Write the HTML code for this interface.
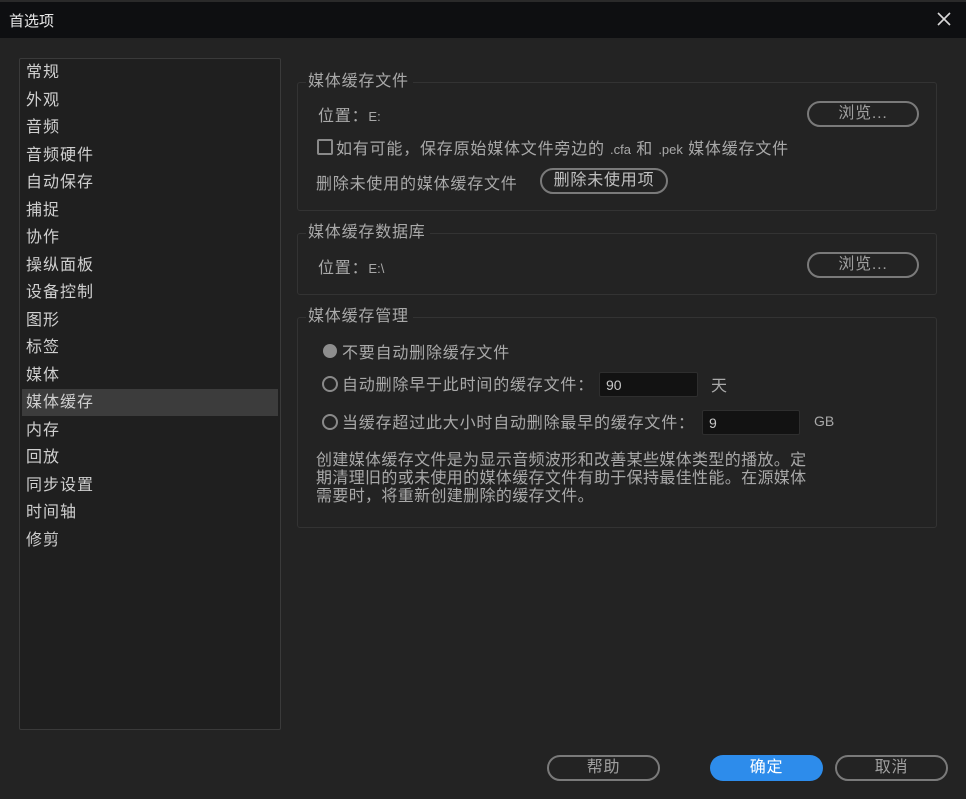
<!DOCTYPE html>
<html><head><meta charset="utf-8"><style>
*{margin:0;padding:0;box-sizing:border-box}
body{width:966px;height:799px;background:#232323;font-family:"Liberation Sans","Noto Sans CJK SC",sans-serif;color:#a9a9a9;position:relative;overflow:hidden;font-size:16px;letter-spacing:0.8px}
.abs{position:absolute;white-space:nowrap}
#title{left:0;top:0;width:966px;height:38px;background:#0e0f11;border-top:2px solid #2a2a2a}
#list{left:19px;top:58px;width:262px;height:672px;background:#1f1f1f;border:1px solid #3a3a3a;border-radius:2px}
.li{position:absolute;left:6px;font-size:16px;color:#cfcfcf;height:27px;line-height:28px;letter-spacing:1px}
.grp{position:absolute;border:1px solid #333;border-radius:3px}
.leg{position:absolute;top:-11px;left:8px;background:#232323;padding:0 4px 0 2px;font-size:16px;color:#a9a9a9;line-height:20px}
.btn{position:absolute;border:2px solid #7a7a7a;border-radius:13px;text-align:center;color:#a0a0a0;font-size:16px}
.inp{position:absolute;background:#121212;border:1px solid #2e2e2e;border-radius:2px;color:#c8c8c8;font-size:14px;padding-left:6px;line-height:24px;letter-spacing:0}
.radio{position:absolute;width:16px;height:16px;border-radius:50%;border:2px solid #8a8a8a}
.sm{font-size:13px;letter-spacing:0}
</style></head><body>
<div id="title" class="abs"></div>
<div class="abs" style="left:9px;top:10px;font-size:15px;color:#e8e8e8;letter-spacing:0">首选项</div>
<svg class="abs" style="left:937px;top:12px" width="14" height="14"><path d="M1 1L13 13M13 1L1 13" stroke="#d8d8d8" stroke-width="1.6"/></svg>

<div id="list" class="abs">
<div class="abs" style="left:2px;top:330px;width:256px;height:27px;background:#3c3c3c"></div>
<div class="li" style="top:0">常规</div>
<div class="li" style="top:27.5px">外观</div>
<div class="li" style="top:55px">音频</div>
<div class="li" style="top:82.5px">音频硬件</div>
<div class="li" style="top:110px">自动保存</div>
<div class="li" style="top:137.5px">捕捉</div>
<div class="li" style="top:165px">协作</div>
<div class="li" style="top:192.5px">操纵面板</div>
<div class="li" style="top:220px">设备控制</div>
<div class="li" style="top:247.5px">图形</div>
<div class="li" style="top:275px">标签</div>
<div class="li" style="top:302.5px">媒体</div>
<div class="li" style="top:330px">媒体缓存</div>
<div class="li" style="top:357.5px">内存</div>
<div class="li" style="top:385px">回放</div>
<div class="li" style="top:412.5px">同步设置</div>
<div class="li" style="top:440px">时间轴</div>
<div class="li" style="top:467.5px">修剪</div>
</div>

<div class="grp" style="left:297px;top:82px;width:640px;height:129px">
<div class="leg">媒体缓存文件</div>
<div class="abs" style="left:20px;top:19px">位置：<span class="sm">E:</span></div>
<div class="btn" style="left:509px;top:18px;width:112px;height:26px;line-height:22px">浏览...</div>
<div class="abs" style="left:19px;top:56px;width:16px;height:16px;border:2px solid #8a8a8a;border-radius:2px"></div>
<div class="abs" style="left:38px;top:52px">如有可能，保存原始媒体文件旁边的 <span class="sm">.cfa</span> 和 <span class="sm">.pek</span> 媒体缓存文件</div>
<div class="abs" style="left:18px;top:87px">删除未使用的媒体缓存文件</div>
<div class="btn" style="left:242px;top:85px;width:128px;height:26px;line-height:22px;color:#c0c0c0">删除未使用项</div>
</div>

<div class="grp" style="left:297px;top:233px;width:640px;height:62px">
<div class="leg">媒体缓存数据库</div>
<div class="abs" style="left:20px;top:20px">位置：<span class="sm">E:\</span></div>
<div class="btn" style="left:509px;top:18px;width:112px;height:26px;line-height:22px">浏览...</div>
</div>

<div class="grp" style="left:297px;top:317px;width:640px;height:211px">
<div class="leg">媒体缓存管理</div>
<div class="abs" style="left:25px;top:26px;width:14px;height:14px;border-radius:50%;background:#8e8e8e"></div>
<div class="abs" style="left:44px;top:21px">不要自动删除缓存文件</div>
<div class="radio" style="left:24px;top:58px"></div>
<div class="abs" style="left:44px;top:53px">自动删除早于此时间的缓存文件：</div>
<div class="inp" style="left:301px;top:54px;width:99px;height:25px">90</div>
<div class="abs" style="left:413px;top:54px">天</div>
<div class="radio" style="left:24px;top:96px"></div>
<div class="abs" style="left:44px;top:91px">当缓存超过此大小时自动删除最早的缓存文件：</div>
<div class="inp" style="left:404px;top:92px;width:98px;height:25px">9</div>
<div class="abs" style="left:516px;top:95px;font-size:14px;letter-spacing:0">GB</div>
<div class="abs" style="left:18px;top:134px;line-height:18px;letter-spacing:0.35px">创建媒体缓存文件是为显示音频波形和改善某些媒体类型的播放。定<br>期清理旧的或未使用的媒体缓存文件有助于保持最佳性能。在源媒体<br>需要时，将重新创建删除的缓存文件。</div>
</div>

<div class="btn" style="left:547px;top:755px;width:113px;height:26px;line-height:22px">帮助</div>
<div class="abs" style="left:710px;top:755px;width:113px;height:26px;border-radius:13px;background:#2d8ceb;color:#fff;text-align:center;line-height:26px;font-size:16px">确定</div>
<div class="btn" style="left:835px;top:755px;width:113px;height:26px;line-height:22px">取消</div>
</body></html>
